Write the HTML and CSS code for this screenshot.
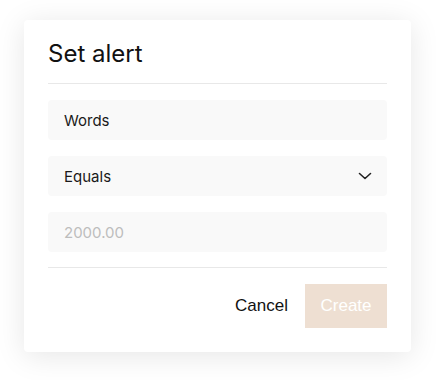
FILE: index.html
```html
<!DOCTYPE html>
<html lang="en">

<head>
    <meta charset="UTF-8">
    <meta name="viewport" content="width=device-width, initial-scale=1.0">
    <title>Set alert</title>
    <link rel="stylesheet" href="styles.css">
</head>

<body>
    <section class="modal">
        <section class="modal-header">
            <span class="modal-title">Set alert</span>
        </section>
        <section class="modal-body">
            <section class="field">
                <span>Words</span>
            </section>
            <section class="field field-select">
                <span>Equals</span>
                <svg class="chevron" width="14" height="14" viewBox="0 0 14 14">
                    <path d="M1.5 4.5 L7 9.5 L12.5 4.5" fill="none" stroke="#222" stroke-width="1.6" stroke-linecap="round" stroke-linejoin="round" />
                </svg>
            </section>
            <section class="field">
                <span class="placeholder">2000.00</span>
            </section>
        </section>
        <section class="modal-footer">
            <button class="btn btn-cancel">Cancel</button>
            <button class="btn btn-create">Create</button>
        </section>
    </section>
</body>

</html>
```

FILE: styles.css
```css
html,
body {
    height: 100%;
}

body {
    margin: 0;
    box-sizing: border-box;
    padding: 20px 25px 0 24px;
    background-color: #fff;
    font-family: Inter, "Liberation Sans", Arial, sans-serif;
    color: #1a1a1a;
}

.modal {
    width: 387px;
    box-sizing: border-box;
    padding: 20px 24px 24px 24px;
    background-color: #fff;
    border-radius: 4px;
    box-shadow: 0 4px 30px rgba(0, 0, 0, 0.1);
}

.modal-header {
    padding-bottom: 15px;
    border-bottom: 1px solid #e8e8e8;
}

.modal-title {
    display: block;
    font-size: 24px;
    line-height: 28px;
    color: #111;
}

.modal-body {
    display: flex;
    flex-direction: column;
    gap: 16px;
    padding: 16px 0 15px 0;
    border-bottom: 1px solid #e8e8e8;
}

.field {
    height: 40px;
    display: flex;
    align-items: center;
    justify-content: space-between;
    padding: 0 16px;
    background-color: #f9f9f9;
    border-radius: 4px;
    font-size: 15px;
}

.placeholder {
    color: #bdbdbd;
}

.chevron {
    margin-right: -1px;
}

.modal-footer {
    display: flex;
    justify-content: flex-end;
    padding-top: 16px;
}

.btn {
    height: 44px;
    padding: 0 15px;
    border: none;
    border-radius: 0;
    font-family: "Liberation Sans", Arial, sans-serif;
    font-size: 17px;
    background: none;
}

.btn-cancel {
    padding-right: 17px;
    color: #111;
}

.btn-create {
    width: 82px;
    background-color: #eedfd2;
    color: #fff;
}
```
